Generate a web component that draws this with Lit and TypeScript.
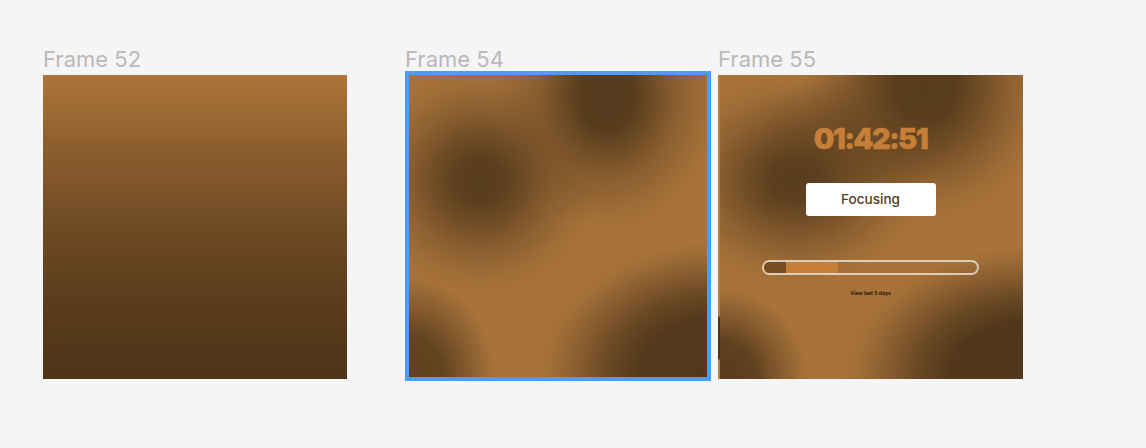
import { LitElement, html, css } from "lit";
import { customElement } from "lit/decorators.js";

@customElement("app-root")
export class AppRoot extends LitElement {
  static styles = css`
    :host {
      display: block;
      width: 1146px;
      height: 448px;
      background: #f5f5f5;
      font-family: Inter, "Liberation Sans", sans-serif;
      overflow: hidden;
    }
    .canvas {
      display: flex;
      align-items: flex-start;
      padding: 46px 0 0 43px;
    }
    .column { display: flex; flex-direction: column; }
    .col-a { width: 304px; margin-right: 58px; }
    .col-b { width: 298px; margin: 0 11px 0 4px; }
    .col-c { width: 305px; }
    .label {
      height: 29px;
      font-size: 22px;
      line-height: 26px;
      color: #b9b9b9;
      white-space: nowrap;
    }
    .col-b .label { margin-left: -4px; }
    .linear {
      height: 304px;
      background: linear-gradient(180deg, #ad753a 0%, #8f602e 22%, #714c25 48%, #5a3c1c 76%, #4f3418 100%);
    }
    .selected {
      height: 302px;
      outline: 4px solid #4a9dfc;
      background-color: #a8733a;
      background-image:
        radial-gradient(ellipse 118px 114px at 71px 105px, rgba(88,60,30,1) 0%, rgba(90,61,30,.96) 20%, rgba(94,64,31,.74) 40%, rgba(96,66,32,.4) 62%, rgba(100,68,34,.14) 84%, rgba(100,68,34,0) 100%),
        radial-gradient(ellipse 112px 135px at 198px 22px, rgba(86,58,29,1) 0%, rgba(88,60,30,1) 24%, rgba(94,64,31,.76) 42%, rgba(96,66,32,.4) 62%, rgba(100,68,34,.14) 85%, rgba(100,68,34,0) 100%),
        radial-gradient(ellipse 178px 135px at 305px 300px, rgba(82,56,27,1) 0%, rgba(84,57,28,1) 42%, rgba(88,60,30,.78) 60%, rgba(92,62,31,.38) 78%, rgba(100,68,34,.1) 92%, rgba(100,68,34,0) 100%),
        radial-gradient(ellipse 86px 100px at 0px 302px, rgba(94,65,31,1) 0%, rgba(96,66,32,.95) 42%, rgba(100,68,34,.5) 70%, rgba(100,68,34,0) 100%);
    }
    .screen {
      position: relative;
      height: 304px;
      display: flex;
      flex-direction: column;
      align-items: center;
      padding-top: 47px;
      box-sizing: border-box;
      background-color: #a8733a;
      background-image:
        radial-gradient(ellipse 130px 105px at 77px 105px, rgba(88,60,30,1) 0%, rgba(90,61,30,.94) 20%, rgba(94,64,31,.72) 40%, rgba(96,66,32,.4) 62%, rgba(100,68,34,.14) 84%, rgba(100,68,34,0) 100%),
        radial-gradient(ellipse 125px 135px at 208px 12px, rgba(88,60,30,1) 0%, rgba(90,61,30,1) 24%, rgba(94,64,31,.78) 42%, rgba(96,66,32,.42) 64%, rgba(100,68,34,.14) 85%, rgba(100,68,34,0) 100%),
        radial-gradient(ellipse 100px 65px at 140px 62px, rgba(92,62,31,.6) 0%, rgba(96,66,32,.36) 50%, rgba(100,68,34,0) 100%),
        radial-gradient(ellipse 185px 130px at 310px 300px, rgba(80,54,26,1) 0%, rgba(82,56,27,1) 42%, rgba(88,60,30,.78) 60%, rgba(92,62,31,.38) 78%, rgba(100,68,34,.1) 92%, rgba(100,68,34,0) 100%),
        radial-gradient(ellipse 90px 92px at 0px 304px, rgba(88,60,29,1) 0%, rgba(92,62,31,.95) 42%, rgba(100,68,34,.5) 70%, rgba(100,68,34,0) 100%);
    }
    .time {
      height: 34px;
      font-size: 29px;
      line-height: 34px;
      font-weight: 900;
      letter-spacing: -1.7px;
      -webkit-text-stroke: 0.3px #c67f38;
      color: #c67f38;
    }
    .status {
      margin-top: 27px;
      width: 130px;
      height: 33px;
      box-sizing: border-box;
      padding-bottom: 1px;
      display: flex;
      align-items: center;
      justify-content: center;
      background: #fff;
      border-radius: 3px;
      font-size: 13.6px;
      font-weight: 500;
      color: #553a1c;
    }
    .bar {
      margin-top: 44px;
      width: 217px;
      height: 15px;
      box-sizing: border-box;
      display: flex;
      border: 2px solid rgba(240, 232, 220, 0.78);
      border-radius: 8px;
      overflow: hidden;
    }
    .seg-dark { width: 22px; background: #784f22; }
    .seg-orange { width: 52px; background: #c67f38; }
    .link {
      margin-top: 14px;
      font-size: 5.2px;
      line-height: 8px;
      font-weight: 600;
      color: #1b1206;
    }
    .strip {
      position: absolute;
      left: 0;
      top: 0;
      bottom: 0;
      width: 2px;
      background: #b87c3d;
    }
    .tab {
      position: absolute;
      left: 0;
      top: 241px;
      width: 2px;
      height: 44px;
      border-radius: 0 2px 2px 0;
      background: #4f3519;
    }
  `;

  render() {
    return html`
      <div class="canvas">
        <div class="column col-a">
          <div class="label">Frame 52</div>
          <div class="linear"></div>
        </div>
        <div class="column col-b">
          <div class="label">Frame 54</div>
          <div class="selected"></div>
        </div>
        <div class="column col-c">
          <div class="label">Frame 55</div>
          <div class="screen">
            <div class="strip"></div>
            <div class="tab"></div>
            <div class="time">01:42:51</div>
            <div class="status">Focusing</div>
            <div class="bar">
              <div class="seg-dark"></div>
              <div class="seg-orange"></div>
            </div>
            <div class="link">View last 5 days</div>
          </div>
        </div>
      </div>
    `;
  }
}
